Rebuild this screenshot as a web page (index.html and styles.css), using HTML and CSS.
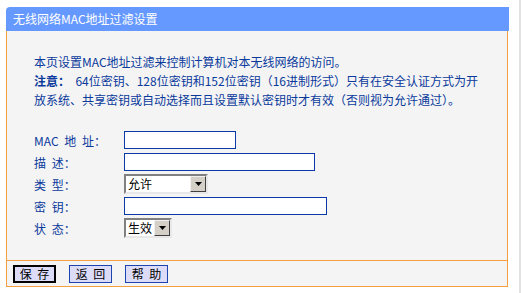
FILE: index.html
```html
<!DOCTYPE html>
<html lang="zh-CN">
<head>
<meta charset="utf-8">
<title>无线网络MAC地址过滤设置</title>
<link rel="stylesheet" href="styles.css">
</head>
<body>
<div class="page">
  <div class="panel">
    <div class="panel-title">无线网络MAC地址过滤设置</div>
    <div class="panel-body">
      <p class="text">本页设置MAC地址过滤来控制计算机对本无线网络的访问。</p>
      <p class="text"><b class="note">注意：</b>&nbsp;&nbsp;64位密钥、128位密钥和152位密钥（16进制形式）只有在安全认证方式为开<br>放系统、共享密钥或自动选择而且设置默认密钥时才有效（否则视为允许通过）。</p>
      <div class="form">
        <div class="row"><span class="label">MAC 地 址：</span><span class="input w-mac"></span></div>
        <div class="row"><span class="label">描 述：</span><span class="input w-desc"></span></div>
        <div class="row"><span class="label">类 型：</span>
          <span class="select w-type"><span class="sel-val">允许</span><span class="sel-btn"><svg width="7" height="4" viewBox="0 0 7 4"><path d="M0 0H7L3.5 4Z" fill="#000"/></svg></span></span>
        </div>
        <div class="row"><span class="label">密 钥：</span><span class="input w-key"></span></div>
        <div class="row"><span class="label">状 态：</span>
          <span class="select w-state"><span class="sel-val">生效</span><span class="sel-btn"><svg width="7" height="4" viewBox="0 0 7 4"><path d="M0 0H7L3.5 4Z" fill="#000"/></svg></span></span>
        </div>
      </div>
    </div>
    <div class="panel-actions">
      <span class="btn btn-default">保 存</span>
      <span class="btn">返 回</span>
      <span class="btn">帮 助</span>
    </div>
  </div>
</div>
</body>
</html>
```
FILE: styles.css
```css
html, body {
  margin: 0;
  padding: 0;
  background: #fff;
}
body {
  width: 521px;
  height: 293px;
  overflow: hidden;
  font-family: "Noto Sans CJK SC", "DejaVu Sans", sans-serif;
  font-size: 12px;
}
.page {
  box-sizing: border-box;
  width: 521px;
  height: 293px;
  padding: 7px 0 0 6px;
  border-right: 2px solid #e2e2e2;
}
.panel {
  width: 502px;
}
.panel-title {
  height: 24px;
  line-height: 24px;
  background: #6699ff;
  color: #fff;
  padding-left: 7px;
  border-top-left-radius: 4px;
  margin-right: -1px;
}
.panel-body {
  background: #f4f4f4;
  border-left: 1px solid #f4a040;
  border-right: 1px solid #f4a040;
  padding: 21px 0 21px 27px;
  color: #0a3a9c;
}
.text {
  margin: 0;
  line-height: 19px;
  white-space: nowrap;
}
.note {
  font-weight: bold;
}
.form {
  margin-top: 20px;
}
.row {
  display: flex;
  align-items: center;
  height: 22px;
}
.label {
  width: 90px;
  flex: none;
  word-spacing: 3px;
}
.input {
  box-sizing: border-box;
  height: 18px;
  background: #fff;
  border: 1px solid #0a3aa8;
}
.w-mac { width: 112px; }
.w-desc { width: 191px; }
.w-key { width: 203px; }
.select {
  box-sizing: border-box;
  height: 20px;
  display: flex;
  background: #fff;
  border: 2px solid;
  border-color: #808080 #e8e8e8 #e8e8e8 #808080;
  color: #000;
}
.w-type { width: 84px; }
.w-state { width: 48px; }
.sel-val {
  flex: 1;
  line-height: 16px;
  padding-left: 2px;
}
.sel-btn {
  box-sizing: border-box;
  width: 16px;
  height: 16px;
  background: #d4d0c8;
  border: 1px solid;
  border-color: #f0f0f0 #404040 #404040 #f0f0f0;
  display: flex;
  align-items: center;
  justify-content: center;
}
.panel-actions {
  background: #f4f4f4;
  border: 1px solid #f4a040;
  height: 25px;
  display: flex;
  align-items: flex-start;
  gap: 13px;
  padding-left: 6px;
}
.btn {
  box-sizing: border-box;
  margin-top: 4px;
  width: 43px;
  height: 18px;
  line-height: 16px;
  text-align: center;
  background: #dcdcf8;
  border: 1px solid #1c44b0;
  color: #000;
  word-spacing: 3px;
}
.btn-default {
  border: 2px solid #000;
  line-height: 14px;
}
```
